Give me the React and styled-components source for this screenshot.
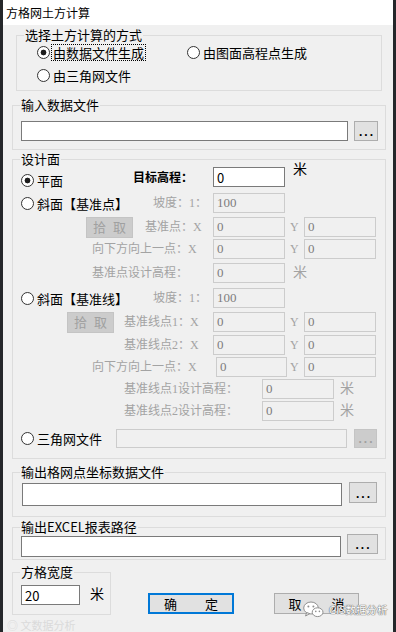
import styled, { createGlobalStyle } from 'styled-components';

const GlobalStyle = createGlobalStyle`
  html, body {
    margin: 0;
    padding: 0;
    background: #25272a;
  }
  body {
    font-family: "Noto Sans CJK SC", "Noto Sans", sans-serif;
    font-size: 12px;
    color: #000;
  }
`;

const SERIF = '"Liberation Serif", "Noto Sans CJK SC", serif';

const Screen = styled.div`
  width: 396px;
  height: 632px;
  box-sizing: border-box;
  padding-left: 3px;
  overflow: hidden;
  background: #25272a;
`;

const Dialog = styled.div`
  position: relative;
  width: 390px;
  height: 632px;
  background: #f0f0f0;
  display: flex;
  flex-direction: column;
`;

const TitleBar = styled.div`
  flex: none;
  height: 25px;
  padding-left: 3px;
  background: #fff;
  display: flex;
  align-items: center;
  font-size: 12px;
`;

const Group = styled.fieldset`
  flex: none;
  box-sizing: border-box;
  width: ${(p) => p.$w || 374}px;
  height: ${(p) => p.$h}px;
  margin: ${(p) => p.$mt || 0}px 0 0 ${(p) => p.$ml || 9}px;
  padding: 0;
  min-width: 0;
  border: 1px solid #dcdcdc;
`;

const Legend = styled.legend`
  margin-left: 7px;
  padding: 0 1px;
  font-size: 13px;
  line-height: 14px;
`;

const ModeList = styled.div`
  display: flex;
  flex-direction: column;
  gap: 3px;
  padding-left: 20px;
`;

const Line = styled.div`
  display: flex;
  align-items: center;
  height: ${(p) => p.$h || 20}px;
  margin-top: ${(p) => p.$mt || 0}px;
  padding-left: ${(p) => p.$indent || 0}px;
`;

const FileRow = styled.div`
  display: flex;
  align-items: flex-start;
  padding-left: ${(p) => p.$indent}px;
`;

const RadioLabel = styled.label`
  flex: none;
  display: flex;
  align-items: center;
  gap: 1px;
  width: ${(p) => p.$w}px;
  height: 20px;
  font-size: 13px;
  ${(p) => (p.$dy !== undefined ? `align-self: flex-start; margin-top: ${p.$dy}px;` : '')}
`;

const RadioDot = styled.span`
  flex: none;
  box-sizing: border-box;
  width: 13px;
  height: 13px;
  border: 1px solid #333;
  border-radius: 50%;
  background: ${(p) =>
    p.$on ? 'radial-gradient(circle, #1c1c1c 0 2.6px, #fff 3.2px)' : '#fff'};
`;

const RadioText = styled.span`
  line-height: 15px;
  padding: 0 1px;
  border: 1px dotted ${(p) => (p.$focus ? '#000' : 'transparent')};
`;

const Field = styled.div`
  flex: none;
  box-sizing: border-box;
  width: ${(p) => p.$w}px;
  height: ${(p) => p.$h || 20}px;
  margin: ${(p) => p.$mt || 0}px 0 0 ${(p) => p.$ml || 0}px;
  padding-left: 3px;
  display: flex;
  align-items: center;
  border: 1px solid ${(p) => (p.$off ? '#cccccc' : '#7a7a7a')};
  background: ${(p) => (p.$off ? '#f0f0f0' : '#fff')};
  color: ${(p) => (p.$off ? '#7d7d7d' : '#000')};
  font-family: ${(p) => (p.$off ? SERIF : 'inherit')};
  font-size: 13px;
`;

const Btn = styled.button`
  flex: none;
  box-sizing: border-box;
  width: ${(p) => p.$w}px;
  height: ${(p) => p.$h || 20}px;
  margin: ${(p) => p.$mt || 0}px 0 0 ${(p) => p.$ml || 0}px;
  padding: 0;
  display: flex;
  align-items: center;
  justify-content: center;
  gap: ${(p) => p.$gap || 0}px;
  border: ${(p) =>
    p.$primary ? '2px solid #0078d7' : `1px solid ${p.$off ? '#c4c4c4' : '#adadad'}`};
  background: ${(p) => (p.$off ? '#cccccc' : '#e1e1e1')};
  color: ${(p) => (p.$off ? '#a0a0a0' : '#000')};
  font-family: inherit;
  font-size: 13px;
  line-height: 16px;
`;

const Dots = styled.span`
  font-family: "Liberation Sans", sans-serif;
  font-weight: 700;
  font-size: 12px;
  letter-spacing: 2px;
  padding-left: 2px;
  margin-top: 2px;
`;

const Caption = styled.span`
  flex: none;
  box-sizing: border-box;
  width: ${(p) => (p.$w ? `${p.$w}px` : 'auto')};
  margin-left: ${(p) => p.$ml || 0}px;
  padding-left: ${(p) => p.$pl || 0}px;
  font-family: ${(p) => (p.$sans ? 'inherit' : SERIF)};
  font-size: ${(p) => p.$size || 12}px;
  font-weight: ${(p) => (p.$bold ? 700 : 400)};
  line-height: 20px;
  white-space: nowrap;
  color: ${(p) => (p.$off ? '#a3a3a3' : '#000')};
  ${(p) => (p.$dy !== undefined ? `align-self: flex-start; margin-top: ${p.$dy}px;` : '')}
`;

const BottomRow = styled.div`
  display: flex;
  align-items: flex-start;
  margin-top: 5px;
`;

const Watermark = styled.div`
  position: absolute;
  left: 300px;
  top: 601px;
  display: flex;
  align-items: center;
  gap: 5px;
  white-space: nowrap;
  font-size: 10.5px;
  color: #fff;
  text-shadow: 0 0 1px #6f6f6f, 0 0 1px #6f6f6f, 0 0 1px #6f6f6f;
`;

const FaintMark = styled.div`
  position: absolute;
  left: 4px;
  top: 617px;
  font-size: 11px;
  color: #dadada;
`;

const Radio = ({ w, on, focus, dy, children }) => (
  <RadioLabel $w={w} $dy={dy}>
    <RadioDot $on={on} />
    <RadioText $focus={focus}>{children}</RadioText>
  </RadioLabel>
);

const Browse = ({ w, h, ml, mt, off }) => (
  <Btn $w={w} $h={h} $ml={ml} $mt={mt} $off={off}>
    <Dots>...</Dots>
  </Btn>
);

const PointPair = ({ label, indent, mt, labelW, firstW = 72, firstMl = 0, yW = 19 }) => (
  <Line $indent={indent} $mt={mt}>
    <Caption $w={labelW} $off>
      {label}
    </Caption>
    <Field $w={firstW} $ml={firstMl} $off>
      0
    </Field>
    <Caption $w={yW} $pl={yW - 14} $off>
      Y
    </Caption>
    <Field $w={72} $off>
      0
    </Field>
  </Line>
);

const WeChatIcon = () => (
  <svg width="21" height="17" viewBox="0 0 21 17">
    <ellipse cx="8" cy="7" rx="7.3" ry="6" fill="#fff" stroke="#8f8f8f" />
    <path d="M3.6 11.6 L2.6 15 L6.8 12.6 Z" fill="#fff" stroke="#8f8f8f" strokeLinejoin="round" />
    <ellipse cx="14.6" cy="11.2" rx="5.4" ry="4.4" fill="#fff" stroke="#8f8f8f" />
    <circle cx="5.4" cy="5.6" r="1" fill="#8f8f8f" />
    <circle cx="10.4" cy="5.6" r="1" fill="#8f8f8f" />
    <circle cx="12.8" cy="10.4" r="0.8" fill="#8f8f8f" />
    <circle cx="16.4" cy="10.4" r="0.8" fill="#8f8f8f" />
  </svg>
);

const App = () => (
  <Screen>
    <GlobalStyle />
    <Dialog>
      <TitleBar>方格网土方计算</TitleBar>

      <Group $mt={3} $ml={13} $w={366} $h={63}>
        <Legend>选择土方计算的方式</Legend>
        <ModeList>
          <Line>
            <Radio w={150} on focus>
              由数据文件生成
            </Radio>
            <Radio w={170}>由图面高程点生成</Radio>
          </Line>
          <Line>
            <Radio w={150}>由三角网文件</Radio>
          </Line>
        </ModeList>
      </Group>

      <Group $mt={7} $h={52}>
        <Legend>输入数据文件</Legend>
        <FileRow $indent={8}>
          <Field $w={327} $h={20} $mt={9} />
          <Browse w={24} h={20} ml={6} mt={9} />
        </FileRow>
      </Group>

      <Group $mt={2} $h={307}>
        <Legend>设计面</Legend>
        <Line $indent={8} $mt={1}>
          <Radio w={112} on dy={3}>
            平面
          </Radio>
          <Caption $w={80} $size={12} $sans $bold>
            目标高程：
          </Caption>
          <Field $w={72}>0</Field>
          <Caption $ml={8} $size={14} $sans $dy={-9}>
            米
          </Caption>
        </Line>

        <Line $indent={8} $mt={6}>
          <Radio w={132}>斜面【基准点】</Radio>
          <Caption $w={60} $off>
            坡度：1：
          </Caption>
          <Field $w={72} $off>
            100
          </Field>
        </Line>
        <Line $indent={73} $mt={4}>
          <Btn $w={47} $h={21} $gap={7} $off>
            <span>拾</span>
            <span>取</span>
          </Btn>
          <Caption $w={80} $pl={12} $off>
            基准点：X
          </Caption>
          <Field $w={72} $off>
            0
          </Field>
          <Caption $w={19} $pl={5} $off>
            Y
          </Caption>
          <Field $w={72} $off>
            0
          </Field>
        </Line>
        <PointPair label="向下方向上一点：X" indent={79} mt={2} labelW={121} />
        <Line $indent={79} $mt={4}>
          <Caption $w={121} $off>
            基准点设计高程：
          </Caption>
          <Field $w={72} $off>
            0
          </Field>
          <Caption $ml={8} $size={14} $off>
            米
          </Caption>
        </Line>

        <Line $indent={8} $mt={5}>
          <Radio w={132}>斜面【基准线】</Radio>
          <Caption $w={60} $off>
            坡度：1：
          </Caption>
          <Field $w={72} $off>
            100
          </Field>
        </Line>
        <Line $indent={54} $mt={4}>
          <Btn $w={47} $h={21} $gap={7} $off>
            <span>拾</span>
            <span>取</span>
          </Btn>
          <Caption $w={99} $pl={10} $off>
            基准线点1：X
          </Caption>
          <Field $w={72} $off>
            0
          </Field>
          <Caption $w={19} $pl={5} $off>
            Y
          </Caption>
          <Field $w={72} $off>
            0
          </Field>
        </Line>
        <PointPair label="基准线点2：X" indent={111} mt={3} labelW={89} />
        <PointPair label="向下方向上一点：X" indent={79} mt={2} labelW={124} firstW={71} yW={17} />
        <Line $indent={111} $mt={2}>
          <Caption $w={138} $off>
            基准线点1设计高程：
          </Caption>
          <Field $w={72} $off>
            0
          </Field>
          <Caption $ml={6} $size={14} $off>
            米
          </Caption>
        </Line>
        <Line $indent={111} $mt={2}>
          <Caption $w={138} $off>
            基准线点2设计高程：
          </Caption>
          <Field $w={72} $off>
            0
          </Field>
          <Caption $ml={6} $size={14} $off>
            米
          </Caption>
        </Line>

        <Line $indent={8} $mt={7}>
          <Radio w={95}>三角网文件</Radio>
          <Field $w={231} $h={19} $off />
          <Browse w={23} h={19} ml={7} off />
        </Line>
      </Group>

      <Group $mt={6} $h={52}>
        <Legend>输出格网点坐标数据文件</Legend>
        <FileRow $indent={9}>
          <Field $w={320} $h={23} $mt={4} />
          <Browse w={28} h={21} ml={7} mt={3} />
        </FileRow>
      </Group>

      <Group $mt={3} $h={40}>
        <Legend>输出EXCEL报表路径</Legend>
        <FileRow $indent={8}>
          <Field $w={320} $h={21} $mt={2} />
          <Browse w={31} h={20} ml={6} />
        </FileRow>
      </Group>

      <BottomRow>
        <Group $w={99} $h={50}>
          <Legend>方格宽度</Legend>
          <FileRow $indent={8}>
            <Field $w={59} $h={20} $mt={6}>
              20
            </Field>
            <Caption $ml={10} $size={14} $sans $dy={4}>
              米
            </Caption>
          </FileRow>
        </Group>
        <Btn $w={86} $h={21} $ml={37} $mt={28} $gap={28} $primary>
          <span>确</span>
          <span>定</span>
        </Btn>
        <Btn $w={85} $h={21} $ml={40} $mt={28} $gap={30}>
          <span>取</span>
          <span>消</span>
        </Btn>
      </BottomRow>

      <Watermark>
        <WeChatIcon />
        <span>GIS数据分析</span>
      </Watermark>
      <FaintMark>◎ 文数据分析</FaintMark>
    </Dialog>
  </Screen>
);

export default App;
